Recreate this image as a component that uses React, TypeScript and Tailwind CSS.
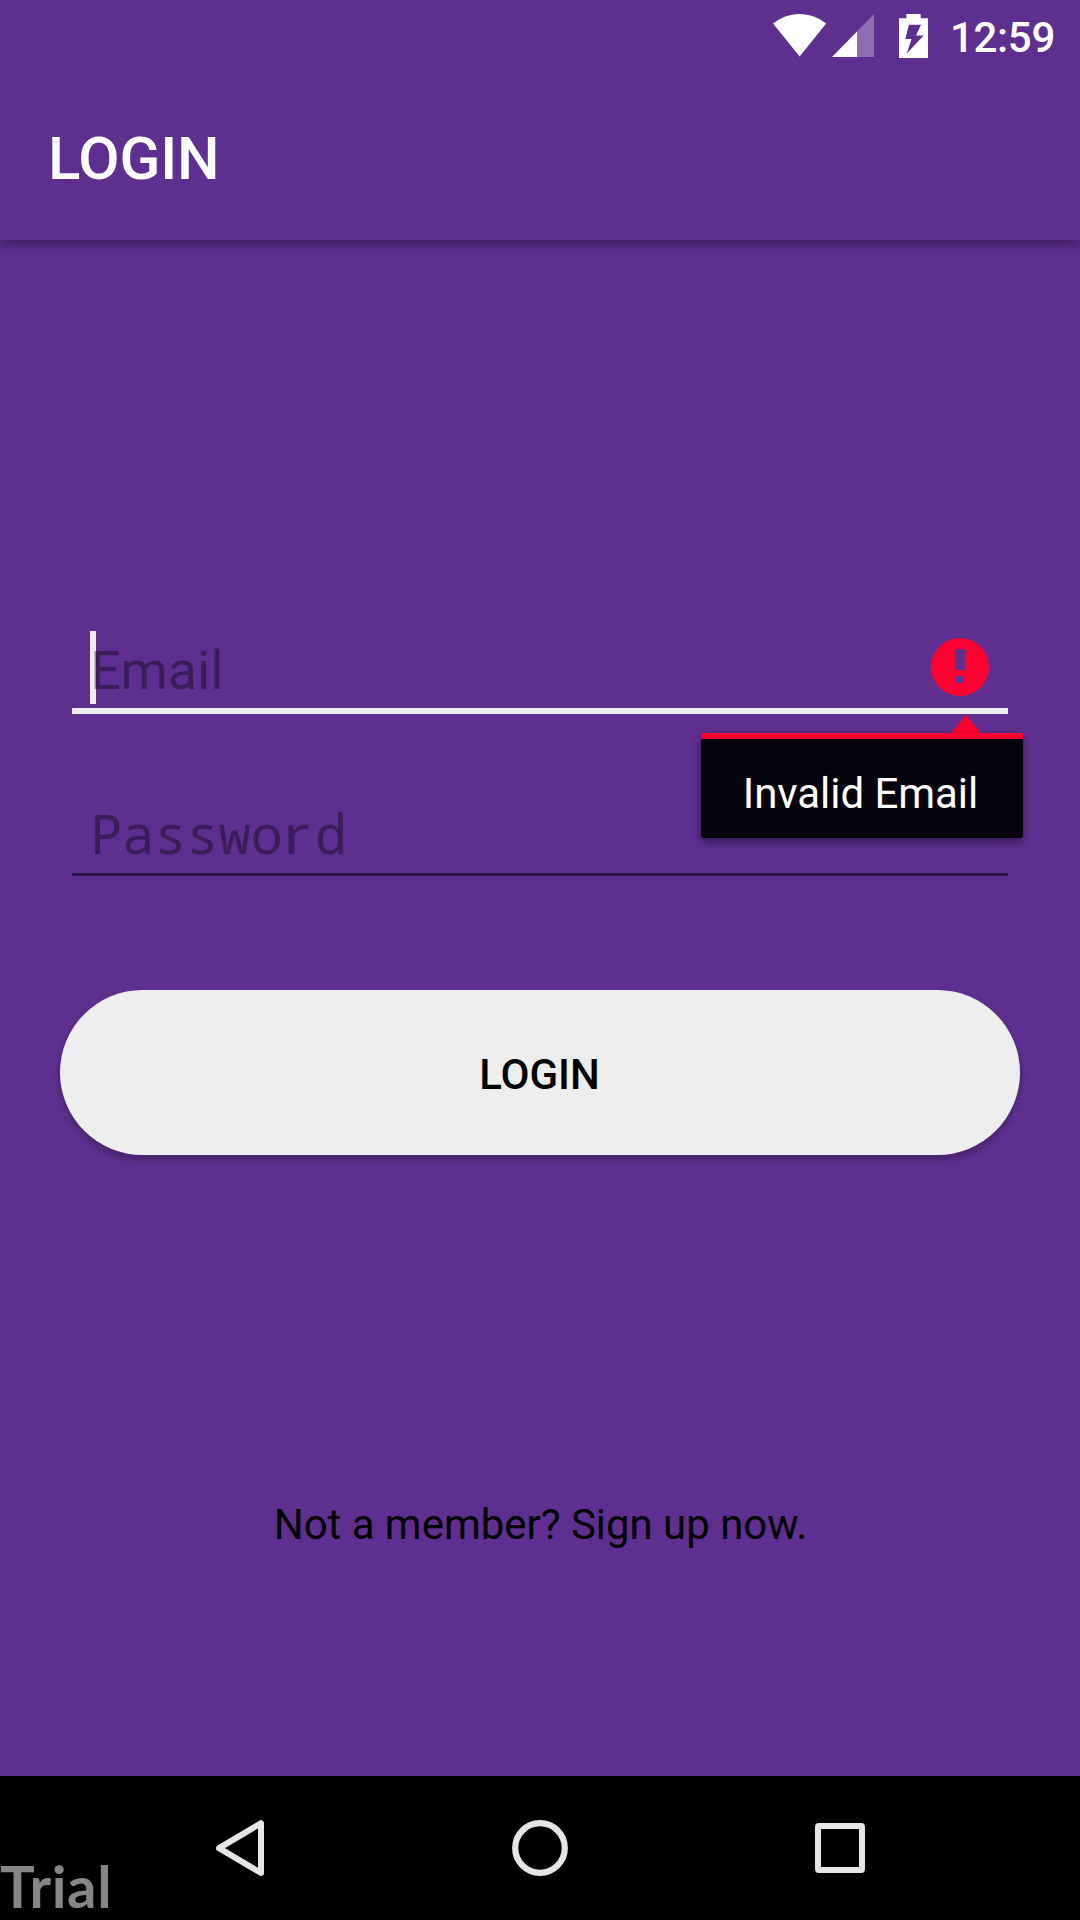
function StatusBar() {
  return (
    <div className="flex h-[72px] items-start justify-end pr-[25px] text-white">
      <svg className="mt-[14px] h-[43px] w-[54px]" viewBox="0 0 54 43" fill="currentColor">
        <path d="M0 9.6C7.6 3.6 16.8 0 26.6 0S45.600 3.600 53.200 9.600L26.600 42.600Z" />
      </svg>
      <svg className="mt-[14px] ml-[5px] h-[43px] w-[42px]" viewBox="0 0 42 43" fill="currentColor">
        <path d="M42 0V43H25V17.400Z" fillOpacity="0.3" />
        <path d="M25 17.400V43H0Z" />
      </svg>
      <svg className="mt-[14px] ml-[25px] h-[44px] w-[29px]" viewBox="0 0 29 44" fill="currentColor">
        <path fillRule="evenodd" d="M7.300 0H21.700V4.300H29V44H0V4.300H7.300ZM10 10.700 6.300 25H12.500L7.800 39.500 24.600 21.600H17L22 10.700Z" />
      </svg>
      <span className="mt-[13px] ml-[22px] text-[42px] leading-[50px] font-medium tracking-[-0.3px]">12:59</span>
    </div>
  );
}

function Header() {
  return (
    <header className="relative h-[240px] bg-[#5f2f90] shadow-[0_6px_10px_rgba(0,0,0,0.3)]">
      <StatusBar />
      <h1 className="mt-[52px] ml-[48px] text-[60px] leading-[70px] font-medium tracking-[-0.15px] text-white">LOGIN</h1>
    </header>
  );
}

function ErrorPopup() {
  return (
    <div className="absolute top-[84px] -right-[15px] z-10 flex w-[322px] flex-col items-end">
      <svg className="mr-[42px] h-[18px] w-[30px]" viewBox="0 0 30 18">
        <path d="M0 18 15 0 30 18Z" fill="#ff0030" />
      </svg>
      <div className="h-[105px] w-full rounded-b-[3px] border-t-[6px] border-[#ff0030] bg-[#07030d] pt-[30px] pr-[3px] text-center text-[42px] leading-[50px] tracking-[-0.05px] text-white shadow-[0_4px_10px_rgba(0,0,0,0.45)]">
        Invalid Email
      </div>
    </div>
  );
}

function EmailField() {
  return (
    <div className="relative flex h-[83px] items-start justify-between border-b-6 border-[#eeeeee] pr-[19px] pl-[18px]">
      <div className="relative h-[73px] border-l-6 border-[#eeeeee]">
        <span className="relative -ml-[6px] block pt-[8px] text-[54px] leading-[63px] tracking-[-0.1px] text-black/38">Email</span>
      </div>
      <svg className="mt-[7px] h-[58px] w-[58px]" viewBox="0 0 58 58">
        <path
          fill="#ff0030"
          fillRule="evenodd"
          d="M29 0a29 29 0 1 1 0 58a29 29 0 1 1 0-58ZM24 11V32H34V11ZM25 38V45H33V38Z"
        />
      </svg>
      <ErrorPopup />
    </div>
  );
}

function PasswordField() {
  return (
    <div className="mt-[82px] h-[80px] border-b-3 border-[#2b1747] pl-[18px] font-['Noto_Sans_Mono','DejaVu_Sans_Mono',monospace] text-[54px] leading-[75px] tracking-[-0.3px] text-black/38">
      Passwo<span className="inline-block w-[32.1px] origin-left scale-x-120 font-['Noto_Sans',sans-serif]">r</span>d
    </div>
  );
}

function NavBar() {
  return (
    <nav className="relative flex h-[144px] items-center justify-center gap-[242px] bg-black">
      <svg className="h-[60px] w-[60px]" viewBox="0 0 60 60" fill="none" stroke="#e6e6e6" strokeWidth="6" strokeLinejoin="round">
        <path d="M53 5.200V55L11 30.200Z" />
      </svg>
      <svg className="h-[60px] w-[60px]" viewBox="0 0 60 60" fill="none" stroke="#e6e6e6" strokeWidth="6.200">
        <circle cx="30" cy="30" r="24.800" />
      </svg>
      <svg className="h-[60px] w-[60px]" viewBox="0 0 60 60" fill="none" stroke="#e6e6e6" strokeWidth="6" strokeLinejoin="round">
        <rect x="6" y="8" width="44" height="44" rx="1" />
      </svg>
      <span className="absolute bottom-[1px] left-0 font-['Lato',sans-serif] text-[58px] leading-[66px] font-bold tracking-[0.6px] text-[#868686]">Trial</span>
    </nav>
  );
}

export default function App() {
  return (
    <div className="flex h-[1920px] w-[1080px] flex-col overflow-hidden bg-[#5f2f90] font-['Roboto',sans-serif]">
      <Header />
      <main className="flex flex-1 flex-col px-[60px] pt-[391px]">
        <div className="mx-[12px]">
          <EmailField />
          <PasswordField />
        </div>
        <button className="mt-[114px] h-[165px] w-full rounded-full bg-[#eeeeee] pt-[4px] pr-[1px] text-[42px] font-medium text-black shadow-[0_5px_9px_rgba(0,0,0,0.27)]">
          LOGIN
        </button>
        <p className="mt-[345px] pl-[1px] text-center text-[42px] leading-[50px] tracking-[-0.03px] text-black">Not a member? Sign up now.</p>
      </main>
      <NavBar />
    </div>
  );
}
